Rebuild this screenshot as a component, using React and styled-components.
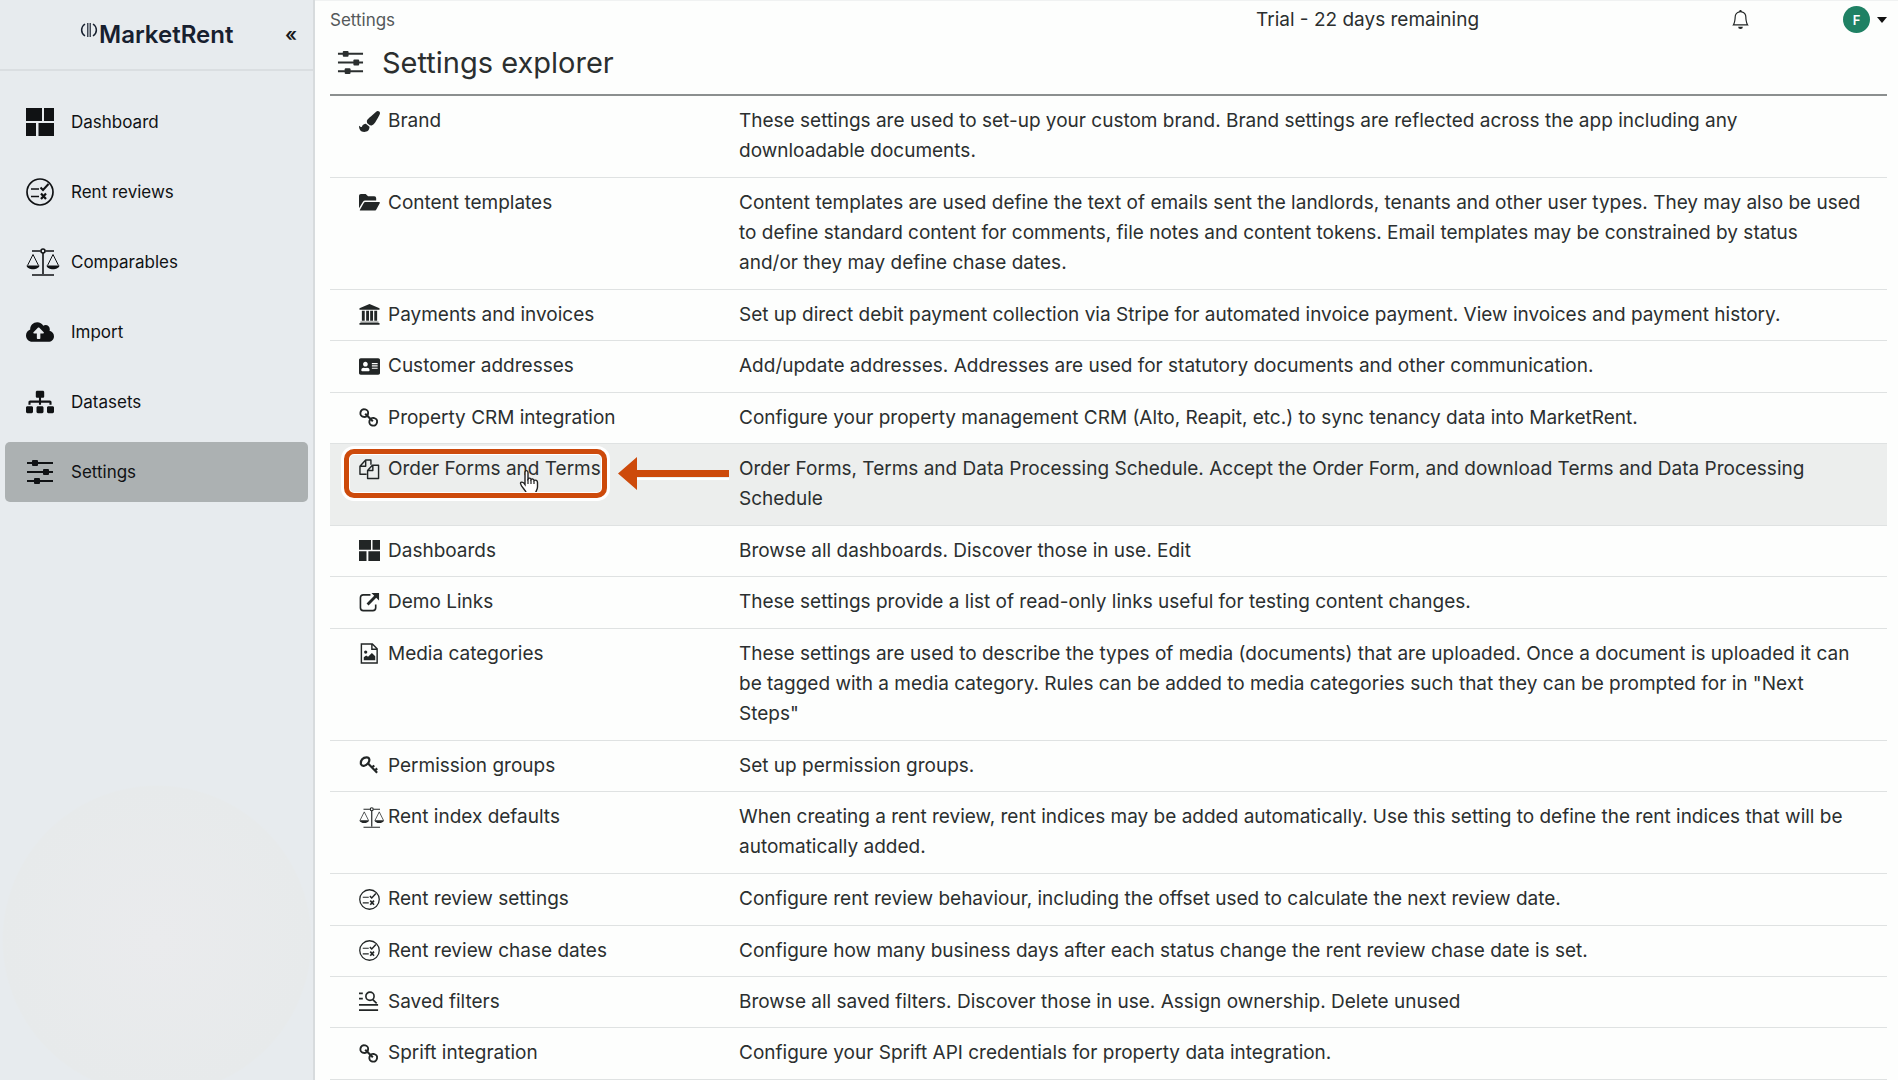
import React from 'react';
import styled, { createGlobalStyle } from 'styled-components';
import { FaAddressCard, FaCloudUploadAlt, FaPaintBrush, FaSitemap } from 'react-icons/fa';
import { BsBell } from 'react-icons/bs';

const GlobalStyle = createGlobalStyle`
    *, *::before, *::after {
        box-sizing: border-box;
    }

    body {
        margin: 0;
        background: #fdfefd;
        color: #2b2f2f;
        font-family: Inter, 'Liberation Sans', sans-serif;
    }
`;

const Page = styled.div`
    display: flex;
    min-height: 100vh;
`;

const SideBar = styled.aside`
    flex: none;
    width: 315px;
    border-right: 2px solid #d7dbdd;
    background: radial-gradient(circle 155px at 157px calc(100% - 140px), #eaebed 0, #e7eaeb 99%, transparent 100%) #e7ebee;
`;

const Brand = styled.div`
    display: flex;
    align-items: center;
    height: 71px;
    padding: 0 16px 0 80px;
    border-bottom: 2px solid #dadee1;
`;

const BrandName = styled.div`
    flex: 1;
    font-size: 24px;
    font-weight: 600;
    color: #17202f;
`;

const BrandMark = styled.svg`
    flex: none;
    align-self: flex-start;
    width: 18px;
    height: 16px;
    margin: 22px 1px 0 0;
`;

const CollapseButton = styled.button`
    padding: 0;
    border: 0;
    background: none;
    color: #17191b;
    font: 600 19px Inter, 'Liberation Sans', sans-serif;
    cursor: pointer;
`;

const Nav = styled.nav`
    display: flex;
    flex-direction: column;
    gap: 10px;
    padding: 21px 5px;
`;

const NavItem = styled.a`
    display: flex;
    align-items: center;
    height: 60px;
    padding-left: 21px;
    border-radius: 5px;
    background: ${ ({ $active }) => $active ? '#acb1b2' : 'transparent' };
    color: #101214;
    font-size: 17px;
    text-decoration: none;
`;

const NavIcon = styled.span`
    display: flex;
    align-items: center;
    width: 45px;

    svg {
        height: 28px;
        width: auto;
    }
`;

const Main = styled.main`
    flex: 1;
    min-width: 0;
    padding: 0 11px 0 15px;
    border-top: 1px solid #f0f2f2;
`;

const TopBar = styled.header`
    display: grid;
    grid-template-columns: 926fr 475fr 112fr 44px;
    align-items: center;
    height: 37px;
    font-size: 19px;
`;

const Crumb = styled.a`
    color: #54595a;
    font-size: 17px;
    text-decoration: none;
`;

const IconButton = styled.button`
    display: flex;
    align-items: center;
    justify-content: space-between;
    padding: 0;
    border: 0;
    background: none;
    color: #222626;
    cursor: pointer;
`;

const Avatar = styled.span`
    display: flex;
    align-items: center;
    justify-content: center;
    width: 27px;
    height: 27px;
    border-radius: 50%;
    background: #1f8164;
    color: #fff;
    font: 600 13px Inter, 'Liberation Sans', sans-serif;
`;

const Caret = styled.span`
    border: 5px solid transparent;
    border-top: 6px solid #111;
    border-bottom: 0;
`;

const Title = styled.h1`
    display: flex;
    align-items: center;
    gap: 18px;
    height: 58px;
    margin: 0;
    padding: 0 0 8px 7px;
    border-bottom: 2px solid #8b8f8f;
    font-size: 29px;
    font-weight: 400;

    svg {
        width: 27px;
        height: 27px;
    }
`;

const Table = styled.table`
    width: 100%;
    height: calc(100vh - 96px);
    border-collapse: collapse;
    table-layout: fixed;
    font-size: 19px;
    line-height: 30px;
`;

const Row = styled.tr`
    border-bottom: 1px solid #dfe2e2;
    background: ${ ({ $hovered }) => $hovered ? '#eceeed' : 'transparent' };
`;

const NameCell = styled.th`
    width: 390px;
    padding: 10px 0 10px 29px;
    font-weight: 400;
    text-align: left;
    vertical-align: top;
`;

const TextCell = styled.td`
    padding: 10px 19px;
    vertical-align: top;
    white-space: pre-line;
`;

const RowLink = styled.a`
    position: relative;
    display: flex;
    align-items: center;
    width: fit-content;
    color: inherit;
    text-decoration: none;
    white-space: nowrap;
`;

const RowIcon = styled.span`
    display: flex;
    align-items: center;
    width: 29px;
    color: #222626;

    svg {
        height: 21px;
        width: auto;
    }
`;

const Highlight = styled.span`
    position: absolute;
    inset: -5px -6px -14px -15px;
    border: 5px solid #cd4a0b;
    border-radius: 10px;
    box-shadow: 0 0 0 3px #fff, inset 0 0 0 1px #fff;
`;

const Arrow = styled.svg`
    position: absolute;
    left: calc(100% + 16px);
    top: 2px;
    width: 112px;
    height: 36px;
`;

const Pointer = styled.svg`
    position: absolute;
    left: 160px;
    top: 15px;
    width: 20px;
    height: 26px;
`;

const SlidersIcon = () => (
    <svg viewBox='0 0 28 28' fill='currentColor'>
        <path d='M1 4h26v2H1zM1 13h26v2H1zM1 22h26v2H1z' />
        <rect x='6' y='2' width='6' height='6' rx='1' />
        <rect x='17' y='11' width='6' height='6' rx='1' />
        <rect x='8' y='20' width='6' height='6' rx='1' />
    </svg>
);

const DashboardIcon = () => (
    <svg viewBox='0 0 28 28' fill='currentColor'>
        <path d='M0 0h16v13H0zM18 0h10v13H18zM0 15h10v13H0zM12.500 15H28v13H12.500z' />
    </svg>
);

const ReviewIcon = () => (
    <svg viewBox='0 0 28 28' fill='none' stroke='currentColor'>
        <circle cx='14' cy='14' r='13' strokeWidth='1.700' />
        <path d='M5 11h8M5 18.500h8' strokeWidth='1.500' />
        <path d='M14.500 9.500l2.500 2.500 5.500-6' strokeWidth='2' />
        <path d='M15 15.500l5 5.500M20 15.500l-5 5.500' strokeWidth='2.200' />
    </svg>
);

const ScalesIcon = () => (
    <svg viewBox='0 0 34 28' fill='none' stroke='currentColor' strokeWidth='1.600'>
        <path d='M6 3h8.500M19.500 3H28M17 5v21M6 27h22' />
        <circle cx='17' cy='3' r='2' />
        <path d='M1.500 17.500L7 6.500l5.500 11M21.500 17.500L27 6.500l5.500 11' strokeWidth='1' />
        <path d='M.5 17.500h13c-1 5-12 5-13 0zM20.500 17.500h13c-1 5-12 5-13 0z' fill='currentColor' stroke='none' />
    </svg>
);

const FolderIcon = () => (
    <svg viewBox='0 0 22 22' fill='currentColor'>
        <path d='M0 4q0-2 2-2h5l2.500 2.500H16q2 0 2 2V9H6.500q-1.500 0-2.500 1.500L0 17z' />
        <path d='M6.500 10.500H21q1.300 0 .7 1.200l-3.700 6.800q-.6 1-1.800 1H1.500q-1 0-.5-1l4-7q.5-1 1.500-1z' />
    </svg>
);

const BankIcon = () => (
    <svg viewBox='0 0 22 22' fill='currentColor'>
        <path d='M11 0l10.500 4.500V6H.5V4.500zM1.500 18.500h19v1H1.500zM.5 20h21v1.700H.5z' />
        <path d='M3 7h3v10.500H3zM7.500 7h3v10.500h-3zM11.700 7h3v10.500h-3zM16 7h3v10.500h-3z' />
    </svg>
);

const LinkIcon = () => (
    <svg viewBox='0 0 22 22' fill='none' stroke='currentColor' strokeWidth='2'>
        <rect x='1.500' y='2.500' width='8' height='8' rx='3.700' transform='rotate(12 6 6.500)' />
        <rect x='11' y='11.500' width='8' height='8' rx='3.700' transform='rotate(12 15 15)' />
        <path d='M6.500 7l8 8' strokeWidth='2.200' />
    </svg>
);

const FilesIcon = () => (
    <svg viewBox='0 0 22 22' fill='none' stroke='currentColor' strokeWidth='1.500' strokeLinejoin='round'>
        <path d='M8 16H1V7.500L7 1h5.500v5M7 1v6.500H1' />
        <path d='M9 20.500V12l5-5.500h6.500v14zM14.500 6.500V12H9' />
    </svg>
);

const ExternalIcon = () => (
    <svg viewBox='0 0 22 22' fill='none' stroke='currentColor'>
        <path d='M12 3H4.500Q1.500 3 1.500 6v10.500q0 3 3 3h10q3 0 3-3V13' strokeWidth='1.700' />
        <path d='M9 13L18 4' strokeWidth='3' />
        <path d='M13 1h8v8z' fill='currentColor' stroke='none' />
    </svg>
);

const FileImageIcon = () => (
    <svg viewBox='0 0 22 22' fill='none' stroke='currentColor' strokeWidth='1.500'>
        <path d='M2.500 1h11.500l5 5v15H2.500zM13.500 1v5.500H19' />
        <circle cx='7' cy='9.500' r='1.700' fill='currentColor' stroke='none' />
        <path d='M5 18v-3l2.500-2 2 1.500 4-4 3.500 3.500v4z' fill='currentColor' stroke='none' />
    </svg>
);

const KeyIcon = () => (
    <svg viewBox='0 0 22 22' fill='none' stroke='currentColor'>
        <path d='M2 9.500C1.500 5.500 4 2.500 8 2.500c3.500 0 3.500 3.500 1.500 6S3.500 13 2 9.500z' strokeWidth='2.300' />
        <path d='M9.500 9l9.500 9.500M13 13.500l3-2.500M16 17l3-3' strokeWidth='2.300' />
    </svg>
);

const FiltersIcon = () => (
    <svg viewBox='0 0 22 22' fill='none' stroke='currentColor' strokeWidth='1.700'>
        <path d='M0 2.500h4M0 8h4M0 14.500h20M0 20h20' strokeWidth='2' />
        <circle cx='11.500' cy='5.500' r='4.300' />
        <path d='M14.500 9l4 4' />
    </svg>
);

const navItems = [
    { title: 'Dashboard', icon: DashboardIcon },
    { title: 'Rent reviews', icon: ReviewIcon },
    { title: 'Comparables', icon: ScalesIcon },
    { title: 'Import', icon: FaCloudUploadAlt },
    { title: 'Datasets', icon: FaSitemap },
    { title: 'Settings', icon: SlidersIcon, active: true }
];

const settings = [
    { title: 'Brand', icon: FaPaintBrush, text: 'These settings are used to set-up your custom brand. Brand settings are reflected across the app including any downloadable documents.' },
    { title: 'Content templates', icon: FolderIcon, text: 'Content templates are used define the text of emails sent the landlords, tenants and other user types. They may also be used to define standard content for comments, file notes and content tokens. Email templates may be constrained by status\nand/or they may define chase dates.' },
    { title: 'Payments and invoices', icon: BankIcon, text: 'Set up direct debit payment collection via Stripe for automated invoice payment. View invoices and payment history.' },
    { title: 'Customer addresses', icon: FaAddressCard, text: 'Add/update addresses. Addresses are used for statutory documents and other communication.' },
    { title: 'Property CRM integration', icon: LinkIcon, text: 'Configure your property management CRM (Alto, Reapit, etc.) to sync tenancy data into MarketRent.' },
    { title: 'Order Forms and Terms', icon: FilesIcon, hovered: true, text: 'Order Forms, Terms and Data Processing Schedule. Accept the Order Form, and download Terms and Data Processing Schedule' },
    { title: 'Dashboards', icon: DashboardIcon, text: 'Browse all dashboards. Discover those in use. Edit' },
    { title: 'Demo Links', icon: ExternalIcon, text: 'These settings provide a list of read-only links useful for testing content changes.' },
    { title: 'Media categories', icon: FileImageIcon, text: 'These settings are used to describe the types of media (documents) that are uploaded. Once a document is uploaded it can be tagged with a media category. Rules can be added to media categories such that they can be prompted for in "Next Steps"' },
    { title: 'Permission groups', icon: KeyIcon, text: 'Set up permission groups.' },
    { title: 'Rent index defaults', icon: ScalesIcon, text: 'When creating a rent review, rent indices may be added automatically. Use this setting to define the rent indices that will be automatically added.' },
    { title: 'Rent review settings', icon: ReviewIcon, text: 'Configure rent review behaviour, including the offset used to calculate the next review date.' },
    { title: 'Rent review chase dates', icon: ReviewIcon, text: 'Configure how many business days after each status change the rent review chase date is set.' },
    { title: 'Saved filters', icon: FiltersIcon, text: 'Browse all saved filters. Discover those in use. Assign ownership. Delete unused' },
    { title: 'Sprift integration', icon: LinkIcon, text: 'Configure your Sprift API credentials for property data integration.' }
];

// Hand pointer, outline and arrow that guide the user to a row
const Callout = () => (
    <>
        <Pointer viewBox='0 0 20 26'>
            <path
                d='M6 14V3.500C6 1 9 1 9 3.500V10c1-1.500 3-1 3 .5 1-1 3-.5 3 1 1.500-1 3.500 0 3.500 2V18c0 3-2 4-2 6.500H7.500C7 21 2 18 1.500 14.500c0-2 2.500-2 4.500 1z'
                fill='#fff' stroke='#222' strokeWidth='1.400' />
            <path d='M9 10v5M12 11v4M15 12v3' stroke='#222' strokeWidth='1.200' />
        </Pointer>
        <Highlight />
        <Arrow viewBox='0 0 112 36'>
            <path d='M20 22h92v2H20z' fill='#fff' />
            <path d='M1 17.500L20 1v13h92v7H20v13z' fill='#cd4a0b' />
        </Arrow>
    </>
);

const SideNav = () => (
    <SideBar>
        <Brand>
            <BrandMark viewBox='0 0 18 16' fill='none' stroke='#17202f'>
                <path d='M5 2C.5 5 .5 11 5 14M13 2c4.500 3 4.500 9 0 12' strokeWidth='1.500' />
                <path d='M7.800 1v14M10.200 1v14' strokeWidth='1.200' />
            </BrandMark>
            <BrandName>MarketRent</BrandName>
            <CollapseButton aria-label='Collapse menu'>«</CollapseButton>
        </Brand>
        <Nav>
            { navItems.map(({ title, icon: Icon, active }) => (
                <NavItem key={ title } href='#' $active={ active }>
                    <NavIcon><Icon /></NavIcon>
                    { title }
                </NavItem>
            )) }
        </Nav>
    </SideBar>
);

const SettingsTable = () => (
    <Table>
        <tbody>
            { settings.map(({ title, icon: Icon, text, hovered }) => (
                <Row key={ title } $hovered={ hovered }>
                    <NameCell scope='row'>
                        <RowLink href='#'>
                            <RowIcon><Icon /></RowIcon>
                            { title }
                            { hovered && <Callout /> }
                        </RowLink>
                    </NameCell>
                    <TextCell>{ text }</TextCell>
                </Row>
            )) }
        </tbody>
    </Table>
);

export default function App() {
    return (
        <Page>
            <GlobalStyle />
            <SideNav />
            <Main>
                <TopBar>
                    <Crumb href='#'>Settings</Crumb>
                    <span>Trial - 22 days remaining</span>
                    <IconButton aria-label='Notifications'><BsBell size={ 19 } /></IconButton>
                    <IconButton aria-label='Account'>
                        <Avatar>F</Avatar>
                        <Caret />
                    </IconButton>
                </TopBar>
                <Title><SlidersIcon />Settings explorer</Title>
                <SettingsTable />
            </Main>
        </Page>
    );
}
